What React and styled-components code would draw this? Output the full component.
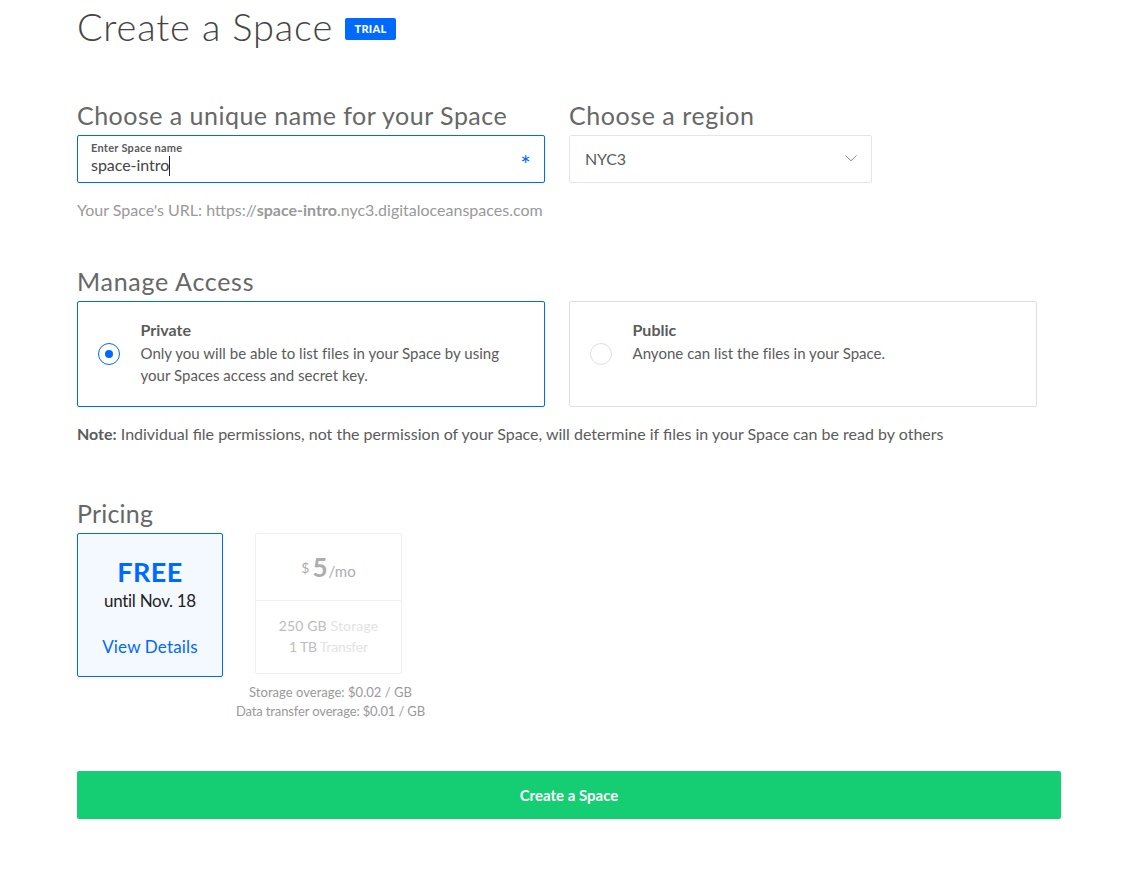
import React from "react";
import styled, { createGlobalStyle } from "styled-components";

const GlobalStyle = createGlobalStyle`
  body {
    margin: 0;
    background: #fff;
    color: #5b5b5b;
    font-family: Lato, "Liberation Sans", sans-serif;
    font-size: 15px;
    line-height: 22px;
  }
  * {
    box-sizing: border-box;
  }
`;

const Page = styled.main`
  width: 984px;
  margin-left: 77px;
`;

const Header = styled.header`
  display: flex;
  align-items: flex-start;
  height: 54px;
  margin-bottom: 41px;
`;

const Title = styled.h1`
  margin: 0;
  width: 268px;
  color: #444;
  font-size: 38px;
  font-weight: 300;
  letter-spacing: 0.85px;
  line-height: 52px;
  white-space: nowrap;
`;

const Badge = styled.span`
  width: 51px;
  height: 22px;
  margin-top: 18px;
  border-radius: 2px;
  background: #0069ff;
  color: #fff;
  font-size: 11px;
  font-weight: 900;
  letter-spacing: 0.3px;
  line-height: 22px;
  text-align: center;
`;

const Columns = styled.div`
  display: flex;
  gap: 24px;
`;

const Column = styled.section`
  width: ${props => props.width || 468}px;
`;

const Section = styled.section`
  margin-top: ${props => props.gap}px;
`;

const Heading = styled.h2`
  margin: 0;
  color: #676767;
  font-size: 25px;
  font-weight: 400;
  letter-spacing: ${props => (props.spacing === undefined ? 0.48 : props.spacing)}px;
  line-height: 40px;
  white-space: nowrap;
`;

const Field = styled.div`
  display: flex;
  align-items: center;
  justify-content: space-between;
  height: 48px;
  padding: 0 13px;
  border: 1px solid ${props => (props.active ? "#0069ff" : "#e5e5e5")};
  border-radius: 2px;
`;

const FieldText = styled.div`
  padding-bottom: 2px;
`;

const FieldLabel = styled.label`
  display: block;
  color: #5b5b5b;
  font-size: 11px;
  font-weight: 700;
  letter-spacing: 0.27px;
  line-height: 14px;
`;

const FieldValue = styled.div`
  display: flex;
  align-items: center;
  height: 20px;
  color: #444;
  font-size: 16px;
  letter-spacing: -0.04px;
`;

const Caret = styled.span`
  width: 1px;
  height: 20px;
  margin-top: 2px;
  background: #222;
`;

const Required = styled.span`
  padding-top: 9px;
  color: #0069ff;
  font-size: 25px;
`;

const Region = styled.span`
  padding-left: 2px;
  font-size: 16px;
  letter-spacing: -0.2px;
`;

const Hint = styled.p`
  margin: 16px 0 0;
  color: #999;
  font-size: 16px;
  white-space: nowrap;
`;

const Option = styled.div`
  display: flex;
  width: 468px;
  height: 106px;
  padding: 16px 20px;
  border: 1px solid ${props => (props.active ? "#0069ff" : "#dfdfdf")};
  border-radius: 2px;
`;

const Radio = styled.span`
  display: flex;
  align-items: center;
  justify-content: center;
  flex: none;
  width: 22px;
  height: 22px;
  margin: 25px 20.5px 0 0;
  border: 1px solid ${props => (props.active ? "#0069ff" : "#dfdfdf")};
  border-radius: 50%;
  &::after {
    content: "";
    width: 8px;
    height: 8px;
    border-radius: 50%;
    background: ${props => (props.active ? "#0069ff" : "transparent")};
  }
`;

const OptionName = styled.strong`
  display: block;
  margin-bottom: 1px;
  font-size: 16px;
  line-height: 23px;
`;

const OptionText = styled.div`
  letter-spacing: 0.03px;
  white-space: nowrap;
`;

const Note = styled.p`
  margin: 16px 0 0;
  font-size: 16px;
  white-space: nowrap;
`;

const FreePlan = styled.div`
  display: flex;
  flex-direction: column;
  align-items: center;
  width: 146px;
  height: 144px;
  padding-top: 22px;
  border: 1px solid #0069ff;
  border-radius: 2px;
  background: #f4f8ff;
`;

const FreePrice = styled.strong`
  color: #0069ff;
  font-size: 27px;
  letter-spacing: 0.4px;
  line-height: 32px;
`;

const Until = styled.span`
  color: #222;
  font-size: 17px;
  letter-spacing: -0.3px;
  line-height: 26px;
`;

const DetailsLink = styled.a`
  margin-top: 20px;
  color: #0069ff;
  font-size: 17px;
  letter-spacing: 0.17px;
  line-height: 26px;
`;

const PlanColumn = styled.div`
  width: 193px;
  margin-left: -13px;
`;

const Plan = styled.div`
  width: 147px;
  height: 141px;
  margin-left: 21px;
  border: 1px solid #f1f1f1;
  border-radius: 2px;
`;

const PlanPrice = styled.div`
  display: flex;
  align-items: baseline;
  justify-content: center;
  height: 67px;
  padding-top: 19px;
  border-bottom: 1px solid #f1f1f1;
  color: #adadad;
  line-height: 28px;
`;

const Dollar = styled.sup`
  position: relative;
  top: -4px;
  margin-right: 3px;
  font-size: 14px;
  vertical-align: baseline;
`;

const Amount = styled.strong`
  margin-right: 1px;
  font-size: 26px;
`;

const PlanFeatures = styled.div`
  padding-top: 14px;
  font-size: 14px;
  line-height: 21px;
  text-align: center;
`;

const Feature = styled.div`
  color: #bdbdbd;
  letter-spacing: ${props => props.spacing}px;
`;

const Unit = styled.span`
  color: #e3e3e3;
`;

const Overage = styled.div`
  padding-top: 9px;
  color: #999;
  font-size: 13px;
  line-height: 19px;
  text-align: center;
  white-space: nowrap;
`;

const OverageLine = styled.div`
  letter-spacing: ${props => props.spacing}px;
`;

const Submit = styled.button`
  display: block;
  width: 100%;
  height: 48px;
  margin-top: 50px;
  padding: 0;
  border: 0;
  border-radius: 2px;
  background: #15cd72;
  color: #fff;
  font: 700 15px Lato, "Liberation Sans", sans-serif;
`;

const Chevron = () => (
  <svg width="14" height="10" viewBox="0 0 14 10" fill="none" stroke="#888">
    <path d="M1.5 1.5L7 6.8L12.5 1.5" />
  </svg>
);

const AccessOption = ({ name, active, children }) => (
  <Option active={active}>
    <Radio active={active} />
    <div>
      <OptionName>{name}</OptionName>
      <OptionText>{children}</OptionText>
    </div>
  </Option>
);

export default function App() {
  return (
    <Page>
      <GlobalStyle />
      <Header>
        <Title>Create a Space</Title>
        <Badge>TRIAL</Badge>
      </Header>
      <Columns>
        <Column>
          <Heading>Choose a unique name for your Space</Heading>
          <Field active>
            <FieldText>
              <FieldLabel>Enter Space name</FieldLabel>
              <FieldValue>
                space-intro
                <Caret />
              </FieldValue>
            </FieldText>
            <Required>*</Required>
          </Field>
          <Hint>
            Your Space's URL: https://<b>space-intro</b>
            .nyc3.digitaloceanspaces.com
          </Hint>
        </Column>
        <Column width={303}>
          <Heading spacing={0.56}>Choose a region</Heading>
          <Field>
            <Region>NYC3</Region>
            <Chevron />
          </Field>
        </Column>
      </Columns>
      <Section gap={40}>
        <Heading spacing={0.7}>Manage Access</Heading>
        <Columns>
          <AccessOption name="Private" active>
            Only you will be able to list files in your Space by using
            <br />
            your Spaces access and secret key.
          </AccessOption>
          <AccessOption name="Public">
            Anyone can list the files in your Space.
          </AccessOption>
        </Columns>
        <Note>
          <b>Note:</b> Individual file permissions, not the permission of your
          Space, will determine if files in your Space can be read by others
        </Note>
      </Section>
      <Section gap={48}>
        <Heading spacing={0.2}>Pricing</Heading>
        <Columns>
          <FreePlan>
            <FreePrice>FREE</FreePrice>
            <Until>until Nov. 18</Until>
            <DetailsLink>View Details</DetailsLink>
          </FreePlan>
          <PlanColumn>
            <Plan>
              <PlanPrice>
                <Dollar>$</Dollar>
                <Amount>5</Amount>
                /mo
              </PlanPrice>
              <PlanFeatures>
                <Feature spacing={0.14}>
                  250 GB <Unit>Storage</Unit>
                </Feature>
                <Feature spacing={-0.2}>
                  1 TB <Unit>Transfer</Unit>
                </Feature>
              </PlanFeatures>
            </Plan>
            <Overage>
              <OverageLine spacing={0.03}>
                Storage overage: $0.02 / GB
              </OverageLine>
              <OverageLine spacing={-0.14}>
                Data transfer overage: $0.01 / GB
              </OverageLine>
            </Overage>
          </PlanColumn>
        </Columns>
      </Section>
      <Submit>Create a Space</Submit>
    </Page>
  );
}
